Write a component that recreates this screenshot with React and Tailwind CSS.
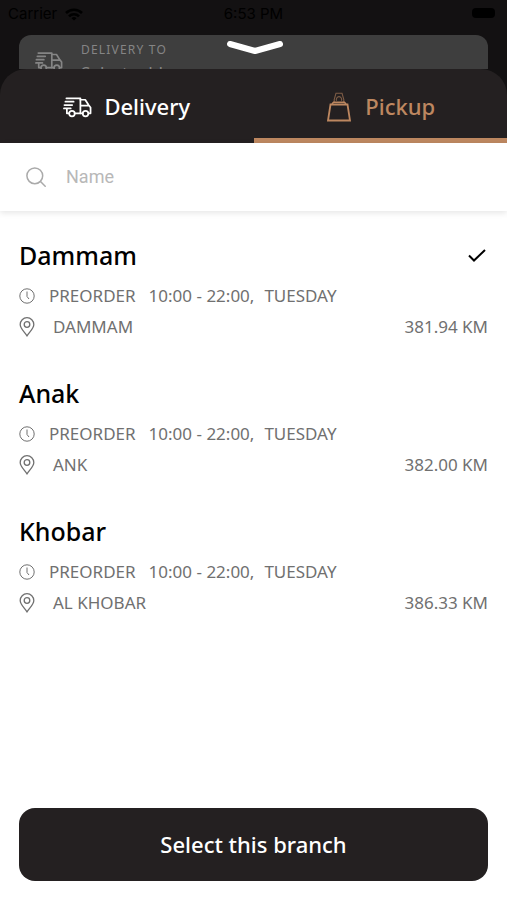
import { useState } from "react";

const branches = [
  { id: 1, name: "Dammam", area: "DAMMAM", distance: "381.94 KM" },
  { id: 2, name: "Anak", area: "ANK", distance: "382.00 KM" },
  { id: 3, name: "Khobar", area: "AL KHOBAR", distance: "386.33 KM" },
];

// --- Icons ---
const TruckIcon = ({ className }) => (
  <svg viewBox="0 0 30 22" className={className} fill="none" stroke="currentColor" strokeWidth="1.8" strokeLinecap="round" strokeLinejoin="round">
    <path d="M3.500 2H18v15.500h-6M2.500 5.500H11M1.500 9H9.500M1 12.500h7M4 12.500v5h2" />
    <path d="M18 3.500h5l3.500 5.500 2 2.500v6h-2M18 17.500h2.500M18.500 9.500h7.500" />
    <circle cx="9.300" cy="17.800" r="2.900" />
    <circle cx="23.300" cy="17.800" r="2.900" />
  </svg>
);

const BagIcon = ({ className }) => (
  <svg viewBox="0 0 24 30" className={className} fill="none" stroke="currentColor">
    <path d="M3.500 12.500h17L23 28.500H1z" strokeWidth="1.800" />
    <path d="M5 12 6.500 10.300h11L19 12" strokeWidth="1.500" />
    <g strokeWidth="1.100" opacity=".6">
      <path d="M7.200 10V7.500L9 1.200h6l1.800 6.300V10" />
      <path d="M9.500 8.800a2.700 3 0 1 1 5 0" />
    </g>
  </svg>
);

const SearchIcon = () => (
  <svg viewBox="0 0 20 20" className="size-5 shrink-0 text-[#aaa]" fill="none" stroke="currentColor" strokeWidth="1.500" strokeLinecap="round">
    <circle cx="8.800" cy="8.800" r="7.900" />
    <path d="m14.500 14.500 4.700 4.700" />
  </svg>
);

const ClockIcon = () => (
  <svg viewBox="0 0 16 16" className="size-4" fill="none" stroke="currentColor" strokeWidth="1">
    <circle cx="8" cy="8" r="7.200" />
    <path d="M8 3.500V8.500l2 2.500" />
  </svg>
);

const PinIcon = () => (
  <svg viewBox="0 0 16 20" className="h-5 w-4" fill="none" stroke="currentColor" strokeWidth="1.300">
    <path d="M8 18.800C5.500 15 1.200 11.500 1.200 7.500a6.800 6.800 0 0 1 13.600 0c0 4-4.300 7.500-6.800 11.300z" />
    <circle cx="8" cy="7.500" r="2.800" />
  </svg>
);

const CheckIcon = () => (
  <svg viewBox="0 0 18 14" className="h-[14px] w-[18px]" fill="none" stroke="currentColor" strokeWidth="2">
    <path d="m1 6.500 5 5L17 1" />
  </svg>
);

const WifiIcon = () => (
  <svg viewBox="0 0 18 13" className="h-[13px] w-[18px]" fill="none" stroke="currentColor" strokeWidth="2.600">
    <path d="M1 5a11.500 11.500 0 0 1 16 0M4 8.300a7 7 0 0 1 10 0" />
    <path d="M9 12.500 6.500 10.200a3.500 3.500 0 0 1 5 0z" fill="currentColor" stroke="none" />
  </svg>
);

// --- Dimmed screen behind the sheet ---
const Backdrop = () => (
  <header className="relative h-[69px] overflow-hidden">
    <div className="grid h-[35px] grid-cols-3 items-start px-2 pt-1 font-['Inter',sans-serif] text-[15px] leading-5 text-black">
      <span className="flex items-center gap-2">
        Carrier <WifiIcon />
      </span>
      <span className="text-center">6:53 PM</span>
      <span className="mt-1 mr-1 h-[10px] w-[23px] justify-self-end rounded-sm bg-black" />
    </div>
    <div className="mx-[19px] flex h-16 gap-[18px] rounded-xl bg-[#3e3e3e] px-4 text-[#858585]">
      <TruckIcon className="mt-4 h-[21px] w-7 shrink-0" />
      <div className="pt-1.5">
        <p className="text-xs leading-[18px] tracking-widest">DELIVERY TO</p>
        <p className="mt-1 text-[17px] leading-5">Select address</p>
      </div>
    </div>
    <button type="button" aria-label="Close" className="absolute top-[39px] left-1/2 -translate-x-1/2">
      <svg viewBox="0 0 58 17" className="h-[17px] w-[58px]" fill="none" stroke="#fff" strokeWidth="6" strokeLinecap="round" strokeLinejoin="round">
        <path d="m5 5 25 7 25-7" />
      </svg>
    </button>
  </header>
);

const Branch = ({ branch, selected, onSelect }) => (
  <li>
    <button type="button" aria-pressed={selected} onClick={onSelect} className="block w-full text-left">
      <span className="flex h-10 items-center justify-between text-[25px] font-medium text-black">
        {branch.name}
        {selected && <span className="mr-0.5"><CheckIcon /></span>}
      </span>
      <span className="mt-1 flex h-8 items-center text-[17px] text-[#707070]">
        <ClockIcon />
        <span className="ml-3.5">PREORDER</span>
        <span className="ml-[13px]">10:00 - 22:00,</span>
        <span className="ml-2.5">TUESDAY</span>
      </span>
      <span className="flex h-[30px] items-center text-[17px] text-[#707070]">
        <PinIcon />
        <span className="ml-[18px]">{branch.area}</span>
        <span className="ml-auto">{branch.distance}</span>
      </span>
    </button>
  </li>
);

export default function App() {
  const [tab, setTab] = useState("pickup");
  const [selectedId, setSelectedId] = useState(1);
  const [query, setQuery] = useState("");

  const shown = branches.filter((b) => b.name.toLowerCase().includes(query.toLowerCase()));
  const tabClass = (name) =>
    `flex items-center justify-center border-b-[5px] pt-1.5 text-[22px] font-medium ${
      tab === name ? "border-[#bd8760] text-[#bd8760]" : "border-transparent text-white"
    }`;

  return (
    <div className="flex min-h-screen flex-col bg-[#131112] font-['Noto_Sans',sans-serif]">
      <Backdrop />

      <main className="flex flex-1 flex-col">
        <nav className="grid h-[74px] grid-cols-2 rounded-t-[26px] bg-[#242021]">
          <button type="button" onClick={() => setTab("delivery")} className={`gap-3 ${tabClass("delivery")}`}>
            <TruckIcon className="h-[22px] w-[29px]" />
            Delivery
          </button>
          <button type="button" onClick={() => setTab("pickup")} className={`gap-3.5 pl-0.5 ${tabClass("pickup")}`}>
            <BagIcon className="h-[30px] w-6" />
            Pickup
          </button>
        </nav>

        <div className="flex flex-1 flex-col bg-white">
          <label className="flex h-[68px] items-center gap-5 px-[26px] shadow-[0_2px_6px_rgba(0,0,0,0.1)]">
            <SearchIcon />
            <input
              type="text"
              aria-label="Name"
              placeholder="Name"
              value={query}
              onChange={(e) => setQuery(e.target.value)}
              className="w-full bg-transparent font-['Roboto',sans-serif] text-lg outline-none placeholder:text-[#b8b8b8]"
            />
          </label>

          <ul className="flex flex-col gap-8 px-[19px] pt-[25px]">
            {shown.map((branch) => (
              <Branch
                key={branch.id}
                branch={branch}
                selected={branch.id === selectedId}
                onSelect={() => setSelectedId(branch.id)}
              />
            ))}
          </ul>

          <div className="mt-auto px-[19px] pt-6 pb-[19px]">
            <button type="button" className="h-[73px] w-full rounded-2xl bg-[#242021] text-[22px] font-medium text-white">
              Select this branch
            </button>
          </div>
        </div>
      </main>
    </div>
  );
}
